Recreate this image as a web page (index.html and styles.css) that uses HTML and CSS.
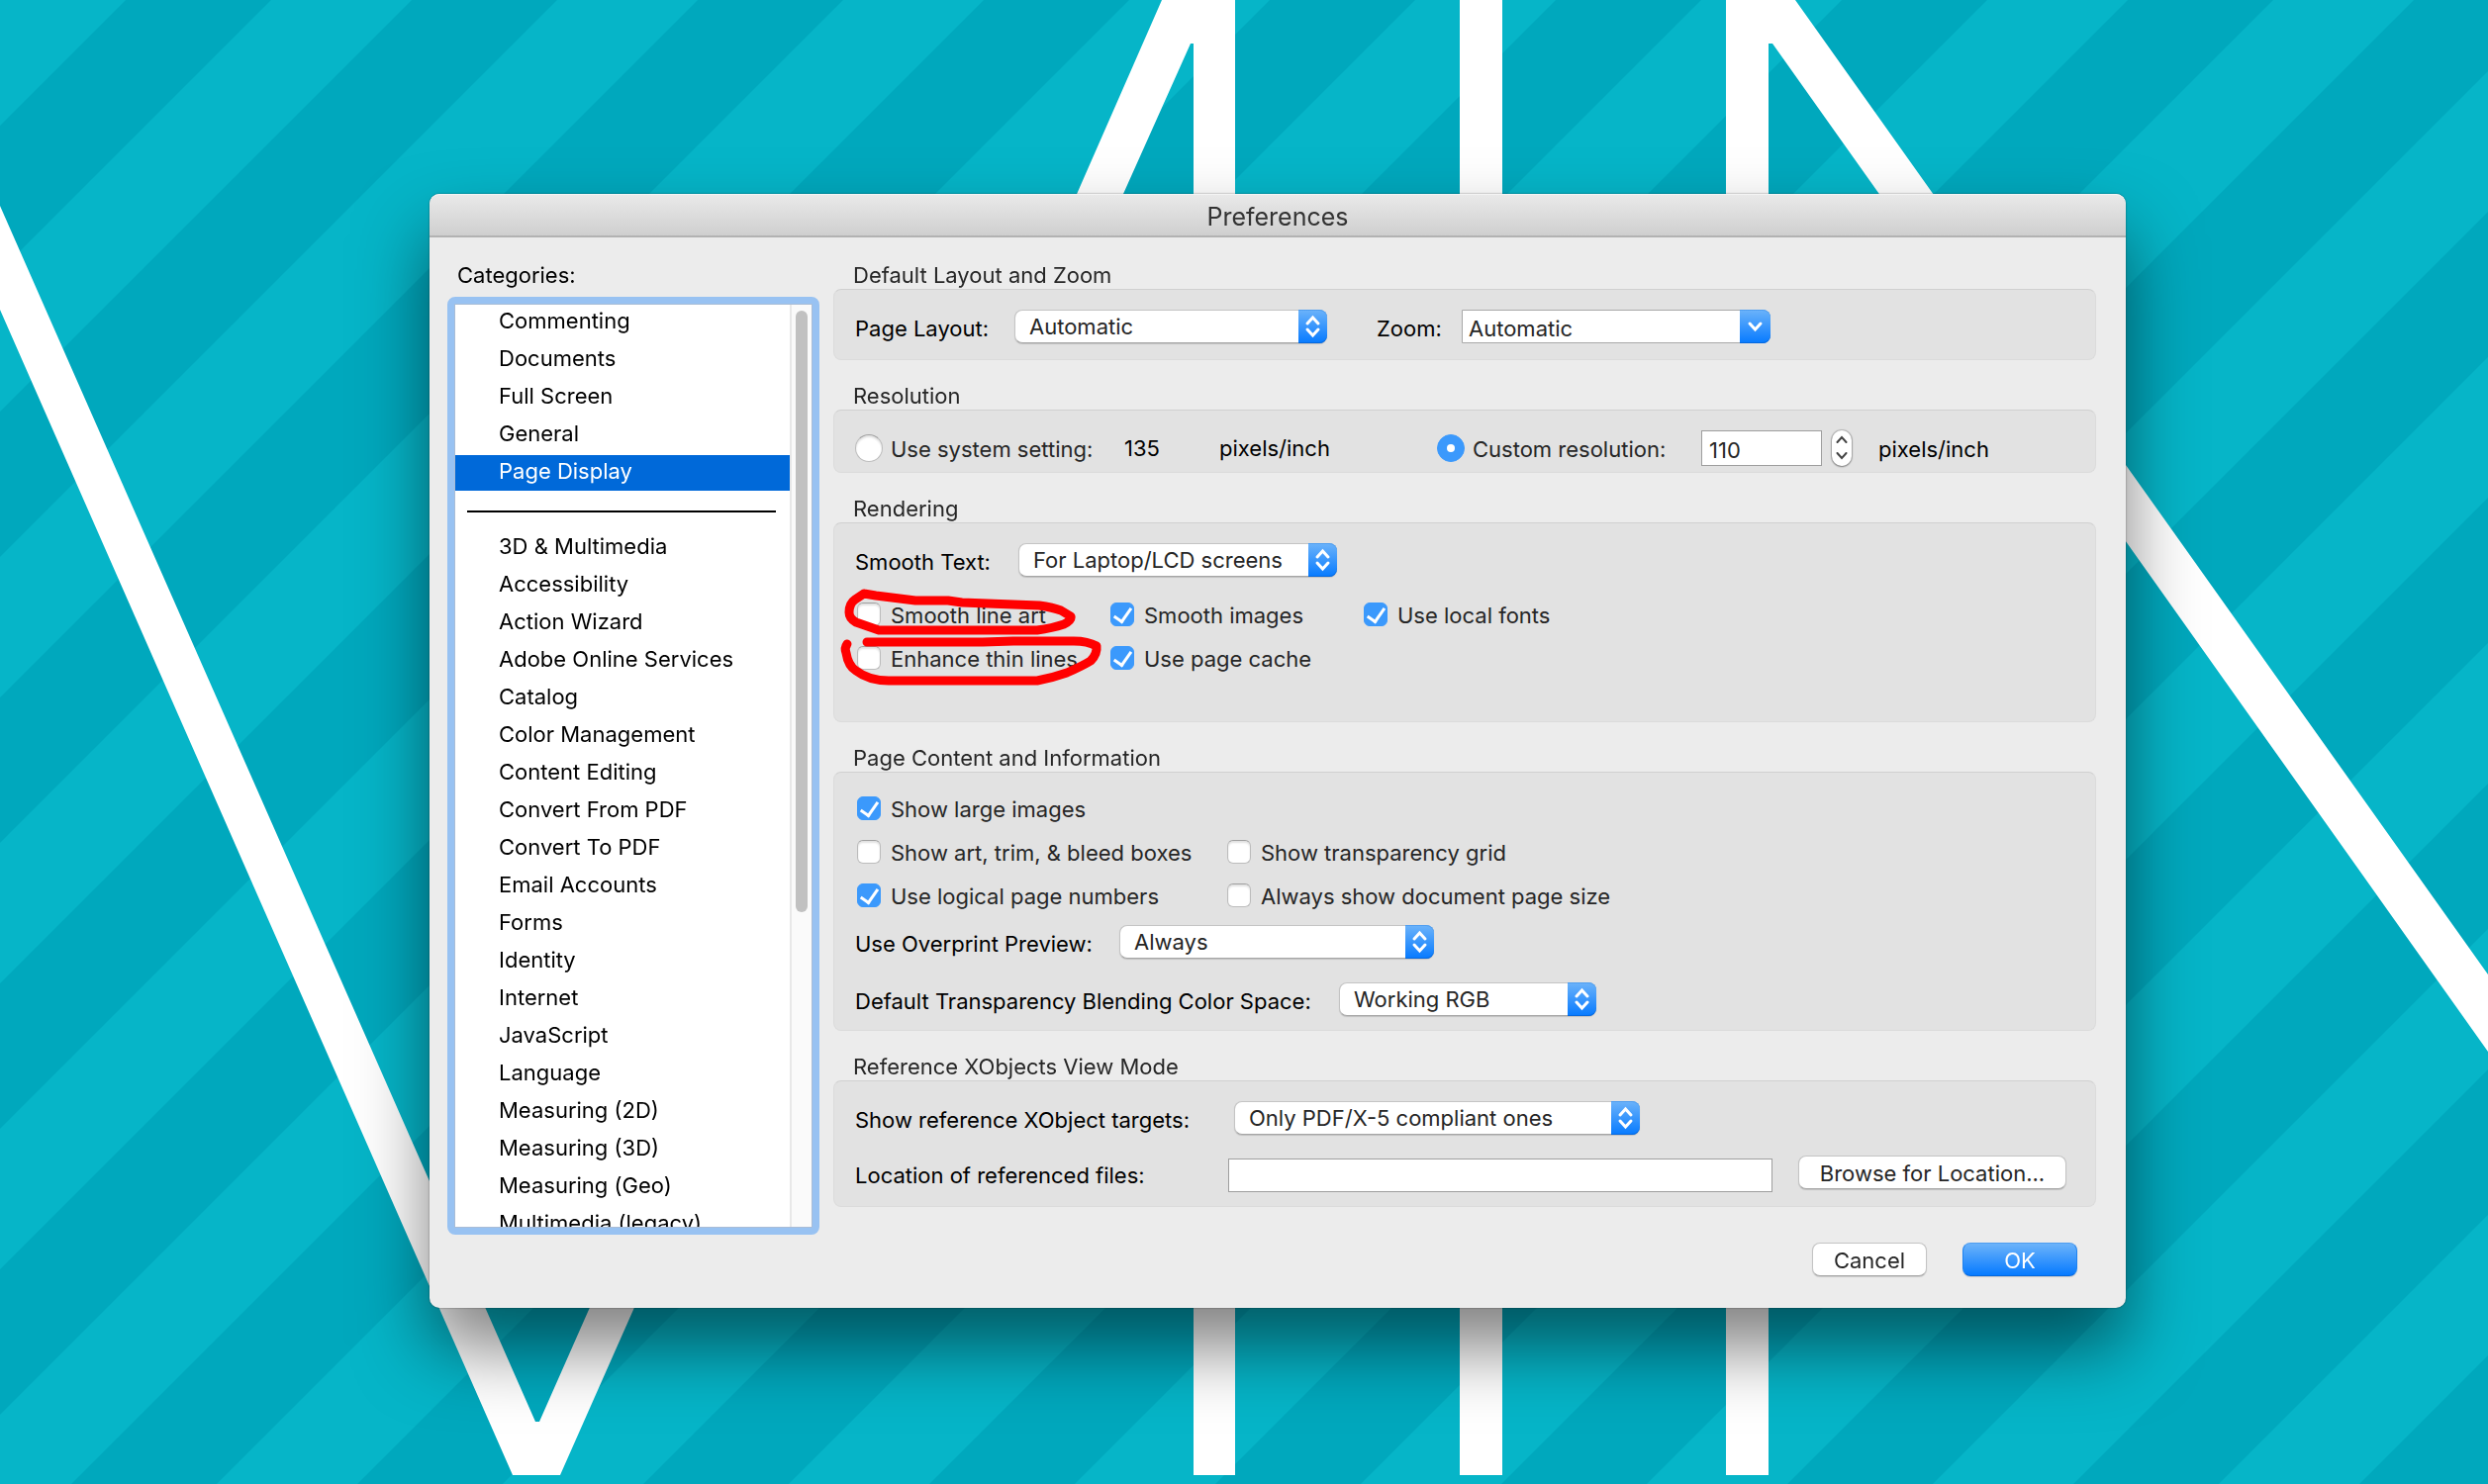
FILE: index.html
```html
<!DOCTYPE html>
<html lang="en">

<head>
    <meta charset="UTF-8">
    <meta name="viewport" content="width=device-width, initial-scale=1.0">
    <title>Preferences</title>
    <link rel="stylesheet" href="styles.css">
</head>

<body>
    <svg class="wallpaper" viewBox="0 0 2514 1500" preserveAspectRatio="xMidYMid slice" aria-hidden="true">
        <defs>
            <pattern id="stripes" x="127" width="289" height="1500" patternUnits="userSpaceOnUse" patternTransform="skewX(-45)">
                <rect width="147" height="1500" fill="#00a8bd" />
            </pattern>
        </defs>
        <rect width="2514" height="1500" fill="#06b5c8" />
        <rect width="2514" height="1500" fill="url(#stripes)" />
        <g fill="#fff">
            <path d="M0 208L541 1437h4L1016 370h46L566 1491h-48L0 313z" />
            <path d="M1174 0h74v1491h-42V44h-3L1135 196 1000 502h-46z" />
            <path d="M1475 0h43v1491h-43z" />
            <path d="M1744 0h70L2514 985v78L1791 44h-4v1447h-43z" />
        </g>
    </svg>

    <form class="window">
        <header class="titlebar">
            <h1 class="title">Preferences</h1>
        </header>
        <div class="content">
            <nav class="sidebar">
                <h2 class="heading sidebar-heading">Categories:</h2>
                <div class="list-box">
                    <ul class="list">
                        <li><a class="item" href="#">Commenting</a></li>
                        <li><a class="item" href="#">Documents</a></li>
                        <li><a class="item" href="#">Full Screen</a></li>
                        <li><a class="item" href="#">General</a></li>
                        <li><a class="item active" href="#">Page Display</a></li>
                        <li class="divider"></li>
                        <li><a class="item" href="#">3D &amp; Multimedia</a></li>
                        <li><a class="item" href="#">Accessibility</a></li>
                        <li><a class="item" href="#">Action Wizard</a></li>
                        <li><a class="item" href="#">Adobe Online Services</a></li>
                        <li><a class="item" href="#">Catalog</a></li>
                        <li><a class="item" href="#">Color Management</a></li>
                        <li><a class="item" href="#">Content Editing</a></li>
                        <li><a class="item" href="#">Convert From PDF</a></li>
                        <li><a class="item" href="#">Convert To PDF</a></li>
                        <li><a class="item" href="#">Email Accounts</a></li>
                        <li><a class="item" href="#">Forms</a></li>
                        <li><a class="item" href="#">Identity</a></li>
                        <li><a class="item" href="#">Internet</a></li>
                        <li><a class="item" href="#">JavaScript</a></li>
                        <li><a class="item" href="#">Language</a></li>
                        <li><a class="item" href="#">Measuring (2D)</a></li>
                        <li><a class="item" href="#">Measuring (3D)</a></li>
                        <li><a class="item" href="#">Measuring (Geo)</a></li>
                        <li><a class="item" href="#">Multimedia (legacy)</a></li>
                    </ul>
                    <div class="scrollbar">
                        <div class="thumb"></div>
                    </div>
                </div>
            </nav>

            <main class="panels">
                <section class="panel">
                    <h2 class="heading">Default Layout and Zoom</h2>
                    <div class="box box-layout">
                        <div class="row">
                            <label class="label label-short" for="page-layout">Page Layout:</label>
                            <div class="popup popup-layout">
                                <select id="page-layout">
                                    <option>Automatic</option>
                                </select>
                                <svg class="arrows" viewBox="0 0 29 34"><path d="M9 14l5.5-6 5.5 6M9 20l5.5 6 5.5-6" /></svg>
                            </div>
                            <label class="label label-zoom" for="zoom">Zoom:</label>
                            <div class="popup combo">
                                <select id="zoom">
                                    <option>Automatic</option>
                                </select>
                                <svg class="arrows" viewBox="0 0 31 34"><path d="M10 14l5.5 6 5.5-6" /></svg>
                            </div>
                        </div>
                    </div>
                </section>

                <section class="panel">
                    <h2 class="heading">Resolution</h2>
                    <div class="box box-resolution">
                        <div class="row">
                            <label class="option option-system"><input class="radio" type="radio" name="resolution"><span>Use system setting:</span></label>
                            <span class="system-value">135</span>
                            <span class="system-unit">pixels/inch</span>
                            <label class="option option-custom"><input class="radio" type="radio" name="resolution" checked><span>Custom resolution:</span></label>
                            <input class="text-input number" type="text" value="110" aria-label="Custom resolution">
                            <div class="stepper">
                                <button class="step" type="button" aria-label="Increase">
                                    <svg viewBox="0 0 20 18"><path d="M5.5 12l4.5-5 4.5 5" /></svg>
                                </button>
                                <button class="step" type="button" aria-label="Decrease">
                                    <svg viewBox="0 0 20 18"><path d="M5.5 5l4.5 5 4.5-5" /></svg>
                                </button>
                            </div>
                            <span class="unit">pixels/inch</span>
                        </div>
                    </div>
                </section>

                <section class="panel">
                    <h2 class="heading">Rendering</h2>
                    <div class="box box-rendering">
                        <div class="row">
                            <label class="label label-smooth" for="smooth-text">Smooth Text:</label>
                            <div class="popup popup-smooth">
                                <select id="smooth-text">
                                    <option>For Laptop/LCD screens</option>
                                </select>
                                <svg class="arrows" viewBox="0 0 29 34"><path d="M9 14l5.5-6 5.5 6M9 20l5.5 6 5.5-6" /></svg>
                            </div>
                        </div>
                        <div class="checks checks-three">
                            <label class="option"><input class="check" type="checkbox"><span>Smooth line art</span></label>
                            <label class="option"><input class="check" type="checkbox" checked><span>Smooth images</span></label>
                            <label class="option"><input class="check" type="checkbox" checked><span>Use local fonts</span></label>
                            <label class="option"><input class="check" type="checkbox"><span>Enhance thin lines</span></label>
                            <label class="option"><input class="check" type="checkbox" checked><span>Use page cache</span></label>
                        </div>
                        <!-- red marker circles -->
                        <svg class="marker" viewBox="846 594 274 106" aria-hidden="true">
                            <path d="M873 600L885 602 925 607H958L972 609 1050 612Q1064 614 1072 617L1082 623Q1083 627 1075 631 1063 635 1048 637H888L865 629Q858 625 858 619 858 610 864 606L873 600" />
                            <path d="M856 651Q853 655 855 660 857 673 865 678 878 688 898 688H1048Q1064 685 1078 680 1094 673 1102 668 1109 661 1108 653 1099 648 1085 648H1024L993 649H876" />
                        </svg>
                    </div>
                </section>

                <section class="panel">
                    <h2 class="heading">Page Content and Information</h2>
                    <div class="box box-content">
                        <div class="checks checks-two">
                            <label class="option option-wide"><input class="check" type="checkbox" checked><span>Show large images</span></label>
                            <label class="option"><input class="check" type="checkbox"><span>Show art, trim, &amp; bleed boxes</span></label>
                            <label class="option"><input class="check" type="checkbox"><span>Show transparency grid</span></label>
                            <label class="option"><input class="check" type="checkbox" checked><span>Use logical page numbers</span></label>
                            <label class="option"><input class="check" type="checkbox"><span>Always show document page size</span></label>
                        </div>
                        <div class="row">
                            <label class="label label-overprint" for="overprint">Use Overprint Preview:</label>
                            <div class="popup popup-overprint">
                                <select id="overprint">
                                    <option>Always</option>
                                </select>
                                <svg class="arrows" viewBox="0 0 29 34"><path d="M9 14l5.5-6 5.5 6M9 20l5.5 6 5.5-6" /></svg>
                            </div>
                        </div>
                        <div class="row row-next">
                            <label class="label label-blending" for="blending">Default Transparency Blending Color Space:</label>
                            <div class="popup popup-blending">
                                <select id="blending">
                                    <option>Working RGB</option>
                                </select>
                                <svg class="arrows" viewBox="0 0 29 34"><path d="M9 14l5.5-6 5.5 6M9 20l5.5 6 5.5-6" /></svg>
                            </div>
                        </div>
                    </div>
                </section>

                <section class="panel">
                    <h2 class="heading">Reference XObjects View Mode</h2>
                    <div class="box box-reference">
                        <div class="row">
                            <label class="label label-targets" for="targets">Show reference XObject targets:</label>
                            <div class="popup popup-targets">
                                <select id="targets">
                                    <option>Only PDF/X-5 compliant ones</option>
                                </select>
                                <svg class="arrows" viewBox="0 0 29 34"><path d="M9 14l5.5-6 5.5 6M9 20l5.5 6 5.5-6" /></svg>
                            </div>
                        </div>
                        <div class="row row-location">
                            <label class="label label-location" for="location">Location of referenced files:</label>
                            <input class="text-input location" id="location" type="text">
                            <button class="button browse" type="button">Browse for Location...</button>
                        </div>
                    </div>
                </section>
            </main>
        </div>
        <footer class="actions">
            <button class="button" type="button">Cancel</button>
            <button class="button primary" type="submit">OK</button>
        </footer>
    </form>
</body>

</html>
```
FILE: styles.css
```css
* {
    box-sizing: border-box;
}

body {
    margin: 0;
    min-height: 100vh;
    padding: 196px 366px 0 434px;
    background: #06b5c8;
    color: #000;
    font: 22px/28px Inter, "Liberation Sans", sans-serif;
    overflow: hidden;
}

input,
select,
button {
    margin: 0;
    font: inherit;
    color: #262626;
    outline: none;
}

.wallpaper {
    position: fixed;
    inset: 0;
    width: 100%;
    height: 100%;
}

.window {
    position: relative;
    background: #ececec;
    border-radius: 10px;
    box-shadow: 0 0 2px rgba(0, 0, 0, .5), 0 40px 72px rgba(0, 0, 0, .5);
}

.titlebar {
    display: flex;
    align-items: center;
    justify-content: center;
    height: 44px;
    padding-top: 2px;
    background: linear-gradient(#e9e9e9, #cfcfcf);
    border-top: 1px solid #f4f4f4;
    border-bottom: 2px solid #b2b2b2;
    border-radius: 10px 10px 0 0;
}

.title {
    margin: 0;
    font-size: 25px;
    font-weight: 400;
    color: #333;
}

.content {
    display: flex;
    gap: 14px;
    padding: 24px 30px 0 18px;
}

.heading {
    margin: 0 0 0 20px;
    font-size: 22px;
    font-weight: 400;
    line-height: 28px;
    color: #262626;
}

/* categories */

.sidebar {
    flex: none;
    width: 376px;
}

.sidebar-heading {
    margin: 0 0 8px 10px;
    color: #000;
}

.list-box {
    display: flex;
    height: 948px;
    padding: 1px;
    background: #a9bdd6;
    border: 7px solid #98c2f2;
    border-radius: 8px;
    overflow: hidden;
}

.list {
    flex: 1;
    margin: 0;
    padding: 0;
    list-style: none;
    background: #fff;
    overflow: hidden;
}

.item {
    display: block;
    height: 36px;
    margin-bottom: 2px;
    padding-left: 44px;
    line-height: 32px;
    color: #000;
    text-decoration: none;
}

.item.active {
    background: #0069d9;
    color: #fff;
}

.divider {
    height: 38px;
    padding: 18px 14px 0 12px;
}

.divider::before {
    content: "";
    display: block;
    height: 2px;
    background: #000;
}

.scrollbar {
    width: 22px;
    padding: 6px 4px;
    background: #fafafa;
    border-left: 2px solid #e8e8e8;
}

.thumb {
    width: 12px;
    height: 608px;
    background: #c1c1c1;
    border-radius: 6px;
}

/* panels */

.panels {
    flex: 1;
}

.panel {
    margin-bottom: 22px;
}

.box {
    position: relative;
    background: #e2e2e2;
    border: 1px solid #dbdbdb;
    border-top-color: #d0d0d0;
    border-radius: 8px;
    padding: 20px 21px 14px;
}

.box-layout {
    padding-bottom: 16px;
}

.box-resolution {
    padding-bottom: 6px;
}

.box-rendering {
    padding-bottom: 52px;
}

.box-content {
    padding-top: 24px;
}

.row {
    display: flex;
    align-items: center;
}

.row-next {
    margin-top: 24px;
}

.row-location {
    align-items: flex-end;
    margin-top: 21px;
}

.label {
    padding-top: 4px;
    white-space: nowrap;
}

.label-short {
    width: 161px;
}

.label-zoom {
    width: 86px;
    margin-left: 50px;
}

.label-smooth {
    width: 165px;
}

.label-overprint {
    width: 267px;
}

.label-blending {
    width: 489px;
}

.label-targets {
    width: 383px;
}

.label-location {
    width: 377px;
    padding-bottom: 3px;
}

/* pop-up menus */

.popup {
    position: relative;
    height: 34px;
}

.popup select {
    appearance: none;
    display: block;
    width: 100%;
    height: 34px;
    padding: 0 40px 0 14px;
    line-height: 32px;
    background: #fff;
    border: 1px solid #c4c4c4;
    border-bottom-color: #a6a6a6;
    border-radius: 8px;
    box-shadow: 0 1px 1px rgba(0, 0, 0, .15);
}

.arrows {
    position: absolute;
    top: 0;
    right: 0;
    width: 29px;
    height: 34px;
    background: linear-gradient(#6cb3fa, #067aff);
    border-radius: 0 8px 8px 0;
    box-shadow: inset 0 1px #4f9ef0, inset 0 -1px #0668dd;
    fill: none;
    stroke: #fff;
    stroke-width: 3px;
    stroke-linecap: round;
    pointer-events: none;
}

.popup-layout {
    width: 316px;
}

.popup-smooth {
    width: 322px;
}

.popup-overprint {
    width: 318px;
}

.popup-blending {
    width: 260px;
}

.popup-targets {
    width: 410px;
}

.combo {
    width: 312px;
}

.combo select {
    padding: 4px 40px 0 6px;
    line-height: 28px;
    border-color: #a9a9a9;
    border-radius: 0 8px 8px 0;
    box-shadow: none;
}

.combo .arrows {
    width: 31px;
}

/* tick boxes and radios */

.option {
    display: flex;
    align-items: center;
    gap: 10px;
    color: #262626;
    white-space: nowrap;
}

.option span {
    padding-top: 2px;
    line-height: 22px;
}

.check,
.radio {
    appearance: none;
    flex: none;
    display: flex;
    align-items: center;
    justify-content: center;
    background: #fff;
    border: 1px solid #bcbcbc;
    border-top-color: #a0a0a0;
    box-shadow: inset 0 2px 2px rgba(0, 0, 0, .12);
}

.check {
    width: 24px;
    height: 24px;
    border-radius: 6px;
}

.radio {
    width: 28px;
    height: 28px;
    border-radius: 50%;
}

.check:checked,
.radio:checked {
    background: #3b99fc;
    border-color: #3b99fc;
    box-shadow: none;
}

.check:checked::before {
    content: "";
    width: 8px;
    height: 15px;
    margin-bottom: 3px;
    border: solid #fff;
    border-width: 0 3px 3px 0;
    transform: rotate(35deg);
}

.radio:checked::before {
    content: "";
    width: 8px;
    height: 8px;
    background: #fff;
    border-radius: 50%;
}

.checks {
    display: grid;
    row-gap: 20px;
    padding-left: 2px;
}

.checks-three {
    grid-template-columns: 256px 256px 1fr;
    margin-top: 26px;
}

.checks-two {
    grid-template-columns: 374px 1fr;
    margin-bottom: 18px;
}

.option-wide {
    grid-column: 1 / -1;
}

.option-system,
.option-custom {
    gap: 8px;
}

.option-system {
    width: 272px;
}

.option-custom {
    width: 267px;
}

.system-value {
    width: 96px;
}

.system-unit {
    width: 220px;
}

.unit {
    padding-top: 2px;
}

/* text boxes and buttons */

.text-input {
    height: 34px;
    padding: 3px 7px 0;
    background: #fff;
    border: 1px solid #9e9e9e;
    border-radius: 0;
}

.number {
    width: 122px;
    height: 36px;
}

.location {
    flex: 1;
}

.stepper {
    width: 20px;
    height: 36px;
    margin: 0 27px 0 10px;
    background: #fff;
    border-radius: 10px;
    box-shadow: 0 0 1px 1px rgba(0, 0, 0, .2), 0 1px 2px rgba(0, 0, 0, .3);
}

.step {
    display: block;
    width: 20px;
    height: 18px;
    padding: 0;
    background: none;
    border: 0;
}

.step svg {
    display: block;
    fill: none;
    stroke: #444;
    stroke-width: 2px;
    stroke-linecap: round;
}

.button {
    min-width: 116px;
    height: 34px;
    padding: 1px 20px 0;
    line-height: 30px;
    background: #fff;
    border: 1px solid #c4c4c4;
    border-bottom-color: #a6a6a6;
    border-radius: 8px;
    box-shadow: 0 1px 1px rgba(0, 0, 0, .15);
}

.browse {
    min-width: 271px;
    margin: 0 8px 3px 26px;
}

.primary {
    color: #fff;
    background: linear-gradient(#6cb3fa, #067aff);
    border-color: #4f9ef0 #1f83f0 #0668dd;
}

.actions {
    display: flex;
    justify-content: flex-end;
    gap: 36px;
    padding: 8px 49px 32px;
}

/* hand-drawn circles over the rendering options */

.marker {
    position: absolute;
    left: 3px;
    top: 65px;
    width: 274px;
    height: 106px;
    fill: none;
    stroke: #f00;
    stroke-width: 9px;
    stroke-linecap: round;
    stroke-linejoin: round;
    pointer-events: none;
}
```
